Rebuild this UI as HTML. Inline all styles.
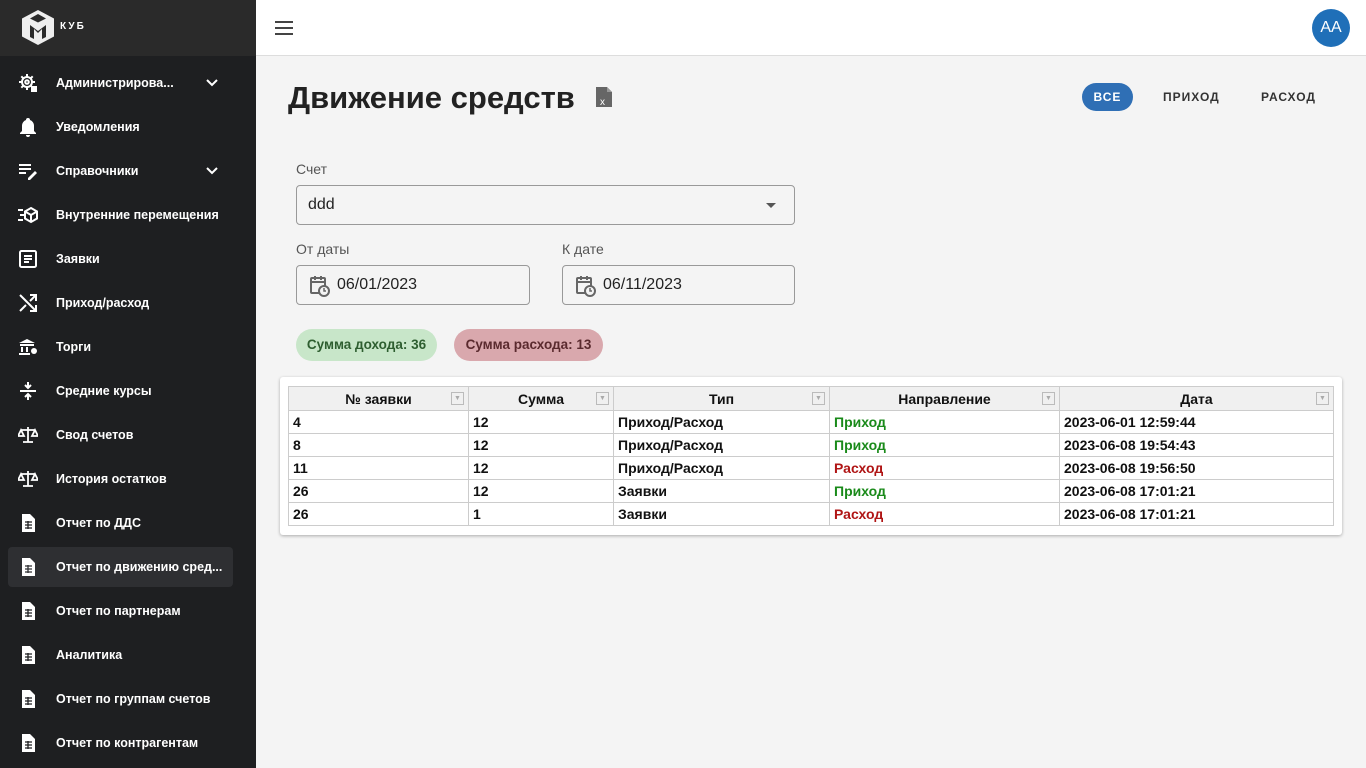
<!DOCTYPE html>
<html><head><meta charset="utf-8"><style>
*{box-sizing:border-box;margin:0;padding:0}
body{width:1366px;height:768px;overflow:hidden;font-family:"Liberation Sans",sans-serif;background:#f4f4f4;position:relative}
.sb{position:absolute;left:0;top:0;width:256px;height:768px;background:#1e1f21;color:#fff}
.logo{height:56px;background:#2a2a2a;position:relative}
.logo span{position:absolute;left:60px;top:21px;font-size:10px;font-weight:bold;letter-spacing:2px}
.it{position:absolute;left:8px;width:225px;height:40px;font-size:12.5px;font-weight:bold;line-height:41px;padding-left:48px;border-radius:4px}
.it.sel{background:#2e2f32}
.ic{position:absolute;left:10px;top:10px;width:20px;height:20px}
.chev{position:absolute;left:197px;top:15px}
.top{position:absolute;left:256px;top:0;right:0;height:56px;background:#fff;border-bottom:1px solid #ddd}
.av{position:absolute;right:16px;top:9px;width:38px;height:38px;border-radius:50%;background:#1f6fb8;color:#fff;font-size:16px;line-height:38px;text-align:center}
h1{position:absolute;left:288px;top:80px;font-size:31px;font-weight:bold;color:#222}
.lbl{position:absolute;font-size:14px;color:#555}
.inp{position:absolute;border:1px solid #999;border-radius:4px;height:40px;font-size:16px;color:#222;line-height:38px;padding-left:11px;background:#f4f4f4}
.chip{position:absolute;top:329px;height:32px;border-radius:16px;font-size:13.5px;line-height:32px;text-align:center;font-weight:bold;white-space:nowrap}
.tabs{position:absolute;top:83px;font-size:12px;font-weight:bold;letter-spacing:1px;height:28px;line-height:28px}
.card{position:absolute;left:280px;top:377px;width:1062px;height:158px;background:#fff;border-radius:3px;box-shadow:0 1px 3px rgba(0,0,0,.3)}
table{position:absolute;left:8px;top:9px;width:1046px;border-collapse:collapse;font-size:14px;font-weight:bold;color:#111}
td,th{border:1px solid #ccc;height:23px;padding:0 4px}
th{background:#f0f0f0;position:relative;font-size:14px;height:24px}
th i{position:absolute;right:4px;top:5px;width:13px;height:13px;border:1px solid #bbb;font-size:7px;color:#aaa;font-style:normal;line-height:11px;text-align:center}
.g{color:#1a8a1a}.r{color:#b01515}
</style></head><body>
<div class="sb">
<div class="logo"><svg style="position:absolute;left:21px;top:9px" width="34" height="37" viewBox="0 0 34 37"><path d="M17 1 33 9.5V27.5L17 36 1 27.5V9.5Z" fill="#eee"/><path d="M9 16v12l4 2V20l4 4 4-4v10l4-2V16l-8 6Z" fill="#2a2a2a"/><path d="M17 5 9 9.5l8 4 8-4Z" fill="#2a2a2a"/></svg><span>КУБ</span></div>
<div class="it" style="top:63px"><svg class="ic" viewBox="0 0 20 20"><g stroke="#fff" stroke-width="2" fill="none"><circle cx="9" cy="9" r="5"/><circle cx="9" cy="9" r="1.8"/><path d="M9 1v3M9 14v3M1 9h3M14 9h3M3.3 3.3l2.1 2.1M12.6 12.6l2.1 2.1M3.3 14.7l2.1-2.1M12.6 5.4l2.1-2.1"/></g><rect x="13" y="13" width="6" height="6" fill="#fff"/></svg>Администрирова...<svg class="chev" width="14" height="10"><path d="M2 2l5 5 5-5" stroke="#fff" stroke-width="2" fill="none"/></svg></div>
<div class="it" style="top:107px"><svg class="ic" viewBox="0 0 20 20"><path d="M10 1a2 2 0 0 1 2 2 6 6 0 0 1 4 6v5l2 2v1H2v-1l2-2V9a6 6 0 0 1 4-6 2 2 0 0 1 2-2zM8 18h4a2 2 0 0 1-4 0z" fill="#fff"/></svg>Уведомления</div>
<div class="it" style="top:151px"><svg class="ic" viewBox="0 0 20 20"><path d="M1 4h12M1 8h12M1 12h7" stroke="#fff" stroke-width="2"/><path d="M10 17l7-7 2 2-7 7h-2z" fill="#fff"/></svg>Справочники<svg class="chev" width="14" height="10"><path d="M2 2l5 5 5-5" stroke="#fff" stroke-width="2" fill="none"/></svg></div>
<div class="it" style="top:195px"><svg class="ic" viewBox="0 0 20 20"><path d="M0 5h5M2 10h4M0 15h5" stroke="#fff" stroke-width="2"/><path d="M13 3l6 3.5v7L13 17l-6-3.5v-7z" fill="none" stroke="#fff" stroke-width="2"/><path d="M7 6.5l6 3.5 6-3.5M13 10v7" stroke="#fff" stroke-width="2" fill="none"/></svg>Внутренние перемещения</div>
<div class="it" style="top:239px"><svg class="ic" viewBox="0 0 20 20"><rect x="2" y="2" width="16" height="16" rx="1.5" fill="none" stroke="#fff" stroke-width="2"/><path d="M6 7h8M6 10h8M6 13h5" stroke="#fff" stroke-width="2"/></svg>Заявки</div>
<div class="it" style="top:283px"><svg class="ic" viewBox="0 0 20 20"><path d="M2 2l16 16M12 2h6v6M2 18l6-6M12 18h6v-6M18 2l-6 6" stroke="#fff" stroke-width="2" fill="none"/></svg>Приход/расход</div>
<div class="it" style="top:327px"><svg class="ic" viewBox="0 0 20 20"><path d="M1 6l8-4 8 4zM2 7h14v2H2zM3 10h2v5H3zM8 10h2v5H8zM1 16h11v2H1z" fill="#fff"/><circle cx="16" cy="14" r="3" fill="#fff"/></svg>Торги</div>
<div class="it" style="top:371px"><svg class="ic" viewBox="0 0 20 20"><path d="M2 10h16M10 1v5M7 4l3 3 3-3M10 19v-5M7 16l3-3 3 3" stroke="#fff" stroke-width="2" fill="none"/></svg>Средние курсы</div>
<div class="it" style="top:415px"><svg class="ic" viewBox="0 0 20 20"><path d="M10 2v15M3 5h14M5 17h10M3 5l-3 6h6zM17 5l-3 6h6z" stroke="#fff" stroke-width="1.8" fill="none"/></svg>Свод счетов</div>
<div class="it" style="top:459px"><svg class="ic" viewBox="0 0 20 20"><path d="M10 2v15M3 5h14M5 17h10M3 5l-3 6h6zM17 5l-3 6h6z" stroke="#fff" stroke-width="1.8" fill="none"/></svg>История остатков</div>
<div class="it" style="top:503px"><svg class="ic" viewBox="0 0 20 20"><path d="M4 1h8l5 5v13H4z" fill="#fff"/><path d="M7 9h7M7 12h7M7 15h7M10 8v8" stroke="#1e1f21" stroke-width="1.3"/></svg>Отчет по ДДС</div>
<div class="it sel" style="top:547px"><svg class="ic" viewBox="0 0 20 20"><path d="M4 1h8l5 5v13H4z" fill="#fff"/><path d="M7 9h7M7 12h7M7 15h7M10 8v8" stroke="#2e2f32" stroke-width="1.3"/></svg>Отчет по движению сред...</div>
<div class="it" style="top:591px"><svg class="ic" viewBox="0 0 20 20"><path d="M4 1h8l5 5v13H4z" fill="#fff"/><path d="M7 9h7M7 12h7M7 15h7M10 8v8" stroke="#1e1f21" stroke-width="1.3"/></svg>Отчет по партнерам</div>
<div class="it" style="top:635px"><svg class="ic" viewBox="0 0 20 20"><path d="M4 1h8l5 5v13H4z" fill="#fff"/><path d="M7 9h7M7 12h7M7 15h7M10 8v8" stroke="#1e1f21" stroke-width="1.3"/></svg>Аналитика</div>
<div class="it" style="top:679px"><svg class="ic" viewBox="0 0 20 20"><path d="M4 1h8l5 5v13H4z" fill="#fff"/><path d="M7 9h7M7 12h7M7 15h7M10 8v8" stroke="#1e1f21" stroke-width="1.3"/></svg>Отчет по группам счетов</div>
<div class="it" style="top:723px"><svg class="ic" viewBox="0 0 20 20"><path d="M4 1h8l5 5v13H4z" fill="#fff"/><path d="M7 9h7M7 12h7M7 15h7M10 8v8" stroke="#1e1f21" stroke-width="1.3"/></svg>Отчет по контрагентам</div>
</div>
<div class="top"><svg style="position:absolute;left:19px;top:21px" width="18" height="14"><path d="M0 1h18M0 7h18M0 13h18" stroke="#444" stroke-width="2"/></svg><div class="av">AA</div></div>
<h1>Движение средств</h1>
<svg style="position:absolute;left:595px;top:86px" width="18" height="22" viewBox="0 0 18 22"><path d="M1 1h11l5 5v15H1z" fill="#666"/><path d="M12 1v5h5" fill="#999"/><text x="5" y="19" font-size="10" fill="#fff" font-family="Liberation Sans">x</text></svg>
<div class="tabs" style="left:1082px;width:51px;background:#2f6fb5;color:#fff;border-radius:14px;text-align:center">ВСЕ</div>
<div class="tabs" style="left:1163px;color:#333">ПРИХОД</div>
<div class="tabs" style="left:1261px;color:#333">РАСХОД</div>
<div class="lbl" style="left:296px;top:161px">Счет</div>
<div class="inp" style="left:296px;top:185px;width:499px">ddd<svg style="position:absolute;right:18px;top:17px" width="10" height="5"><path d="M0 0h10L5 5z" fill="#555"/></svg></div>
<div class="lbl" style="left:296px;top:241px">От даты</div>
<div class="lbl" style="left:562px;top:241px">К дате</div>
<div class="inp" style="left:296px;top:265px;width:234px;padding-left:40px">06/01/2023<svg style="position:absolute;left:13px;top:9px" width="20" height="22" viewBox="0 0 20 22"><rect x="1" y="3" width="14" height="15" rx="1" fill="none" stroke="#666" stroke-width="2"/><path d="M1 7h14M5 1v4M11 1v4" stroke="#666" stroke-width="2"/><circle cx="14" cy="16" r="5" fill="#f4f4f4" stroke="#666" stroke-width="2"/><path d="M14 13v3h2" stroke="#666" stroke-width="1.5" fill="none"/></svg></div>
<div class="inp" style="left:562px;top:265px;width:233px;padding-left:40px">06/11/2023<svg style="position:absolute;left:13px;top:9px" width="20" height="22" viewBox="0 0 20 22"><rect x="1" y="3" width="14" height="15" rx="1" fill="none" stroke="#666" stroke-width="2"/><path d="M1 7h14M5 1v4M11 1v4" stroke="#666" stroke-width="2"/><circle cx="14" cy="16" r="5" fill="#f4f4f4" stroke="#666" stroke-width="2"/><path d="M14 13v3h2" stroke="#666" stroke-width="1.5" fill="none"/></svg></div>
<div class="chip" style="left:296px;width:141px;background:#c8e6c9;color:#2e5e30">Сумма дохода: 36</div>
<div class="chip" style="left:454px;width:149px;background:#d9a8ad;color:#5a2a2e">Сумма расхода: 13</div>
<div class="card"><table>
<tr><th style="width:180px">№ заявки<i>▼</i></th><th style="width:145px">Сумма<i>▼</i></th><th style="width:216px">Тип<i>▼</i></th><th style="width:230px">Направление<i>▼</i></th><th>Дата<i>▼</i></th></tr>
<tr><td>4</td><td>12</td><td>Приход/Расход</td><td class="g">Приход</td><td>2023-06-01 12:59:44</td></tr>
<tr><td>8</td><td>12</td><td>Приход/Расход</td><td class="g">Приход</td><td>2023-06-08 19:54:43</td></tr>
<tr><td>11</td><td>12</td><td>Приход/Расход</td><td class="r">Расход</td><td>2023-06-08 19:56:50</td></tr>
<tr><td>26</td><td>12</td><td>Заявки</td><td class="g">Приход</td><td>2023-06-08 17:01:21</td></tr>
<tr><td>26</td><td>1</td><td>Заявки</td><td class="r">Расход</td><td>2023-06-08 17:01:21</td></tr>
</table></div>
</body></html>
